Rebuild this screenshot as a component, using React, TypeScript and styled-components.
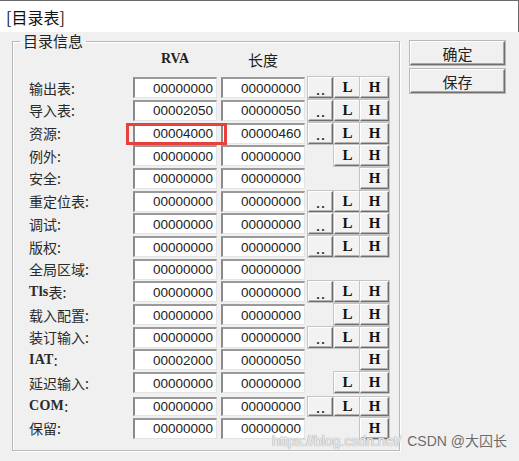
import React from 'react';
import styled, { createGlobalStyle } from 'styled-components';

const GlobalStyle = createGlobalStyle`
  html, body {
    margin: 0;
    padding: 0;
    background: #f0f0f0;
  }
  body {
    font-family: "Noto Sans CJK SC", "Liberation Sans", sans-serif;
    color: #222;
  }
`;

const cjk = `"Noto Sans CJK SC", "Liberation Sans", sans-serif`;
const serif = `"Liberation Serif", "DejaVu Serif", serif`;

type Row = {
  label: React.ReactNode;
  rva: string;
  size: string;
  dots?: boolean;
  low?: boolean;
  high?: boolean;
  mark?: boolean;
  spaced?: boolean;
};

const Latin = styled.span`
  font-family: ${serif};
  font-size: 14px;
  font-weight: 700;
  letter-spacing: 0.3px;
`;

const rows: Row[] = [
  { label: '输出表:', rva: '00000000', size: '00000000', dots: true, low: true, high: true },
  { label: '导入表:', rva: '00002050', size: '00000050', dots: true, low: true, high: true },
  { label: '资源:', rva: '00004000', size: '00000460', dots: true, low: true, high: true, mark: true },
  { label: '例外:', rva: '00000000', size: '00000000', low: true, high: true },
  { label: '安全:', rva: '00000000', size: '00000000', high: true },
  { label: '重定位表:', rva: '00000000', size: '00000000', dots: true, low: true, high: true },
  { label: '调试:', rva: '00000000', size: '00000000', dots: true, low: true, high: true },
  { label: '版权:', rva: '00000000', size: '00000000', dots: true, low: true, high: true },
  { label: '全局区域:', rva: '00000000', size: '00000000' },
  { label: <><Latin>Tls</Latin>表:</>, rva: '00000000', size: '00000000', dots: true, low: true, high: true },
  { label: '载入配置:', rva: '00000000', size: '00000000', low: true, high: true },
  { label: '装订输入:', rva: '00000000', size: '00000000', dots: true, low: true, high: true },
  { label: <><Latin>IAT</Latin>:</>, rva: '00002000', size: '00000050', high: true },
  { label: '延迟输入:', rva: '00000000', size: '00000000', low: true, high: true },
  { label: <><Latin>COM</Latin>:</>, rva: '00000000', size: '00000000', dots: true, low: true, high: true, spaced: true },
  { label: '保留:', rva: '00000000', size: '00000000', high: true },
];

const Window = styled.div`
  position: relative;
  width: 519px;
  height: 461px;
  overflow: hidden;
  display: flex;
  flex-direction: column;
`;

const TitleBar = styled.div`
  height: 31px;
  background: #fff;
  border-top: 1px solid #6a6a6a;
  border-right: 1px solid #6a6a6a;
  box-sizing: content-box;
  display: flex;
  align-items: center;
  padding-left: 6px;
  font-family: ${cjk};
  font-size: 16px;
  color: #111;
`;

const Body = styled.div`
  flex: 1;
  display: flex;
  align-items: flex-start;
  padding-left: 12px;
  border-left: 1px solid #6a6a6a;
  margin-left: -1px;
`;

const Group = styled.fieldset`
  margin: 0;
  padding: 0 0 11px 0;
  width: 388px;
  box-sizing: border-box;
  border: 1px solid #b9b9b9;
  box-shadow: inset 1px 1px 0 #fff, 1px 1px 0 #fff;
  min-inline-size: 0;
`;

const Legend = styled.legend`
  margin-left: 7px;
  padding: 0 3px;
  line-height: 18px;
  font-family: ${cjk};
  font-size: 15px;
  color: #222;
`;

const Grid = styled.div`
  display: grid;
  grid-template-columns: 100px 84px 84px 24px 24px 24px;
  grid-template-rows: 25.5px;
  grid-auto-rows: 21px;
  column-gap: 4px;
  row-gap: 1.7px;
  padding-left: 16px;
  & > :nth-child(6n + 4) { margin-left: -1px; }
  & > :nth-child(6n + 5) { margin-left: -3px; }
  & > :nth-child(6n + 6) { margin-left: -5px; }
`;

const HeaderCell = styled.div<{ $latin?: boolean }>`
  height: 18px;
  display: flex;
  align-items: center;
  justify-content: center;
  font-family: ${p => (p.$latin ? serif : cjk)};
  font-weight: ${p => (p.$latin ? 700 : 400)};
  font-size: ${p => (p.$latin ? '14px' : '15px')};
  color: #222;
`;

const Label = styled.div<{ $spaced?: boolean }>`
  display: flex;
  align-items: center;
  margin-top: ${p => (p.$spaced ? '2px' : '0')};
  font-family: ${cjk};
  font-size: 14px;
  color: #2a2a2a;
`;

const Field = styled.div<{ $mark?: boolean; $spaced?: boolean }>`
  position: relative;
  z-index: ${p => (p.$mark ? 1 : 0)};
  margin-top: ${p => (p.$spaced ? '2px' : '0')};
  box-sizing: border-box;
  background: #fff;
  border-top: 2px solid #9a9a9a;
  border-left: 2px solid #8a8a8a;
  border-right: 1px solid #e4e4e4;
  border-bottom: 1px solid #e4e4e4;
  display: flex;
  align-items: center;
  justify-content: flex-end;
  padding-right: 3px;
  font-family: "Liberation Sans", Arial, sans-serif;
  font-size: 13.5px;
  color: #222;

  &::after {
    content: '';
    display: ${p => (p.$mark ? 'block' : 'none')};
    position: absolute;
    left: -9px;
    top: -2px;
    right: -11px;
    bottom: -2px;
    border: 3px solid #e8403a;
  }
`;

const SmallButton = styled.button<{ $spaced?: boolean; $hidden?: boolean }>`
  visibility: ${p => (p.$hidden ? 'hidden' : 'visible')};
  margin: ${p => (p.$spaced ? '2px' : '0')} 0 0 0;
  padding: 0;
  box-sizing: border-box;
  background: #f2f2f2;
  border: 1px solid;
  border-color: #fff #6e6e6e #6e6e6e #fff;
  box-shadow: 0 0 0 1px #c4c4c4, inset -1px -1px 0 #b4b4b4;
  font-family: ${serif};
  font-size: 15px;
  font-weight: 700;
  color: #111;
  display: flex;
  align-items: center;
  justify-content: center;
  line-height: 1;
`;

const Dots = styled.span`
  font-size: 12px;
  letter-spacing: 2px;
  padding: 6px 0 0 2px;
`;

const Side = styled.div`
  margin-top: 9px;
  margin-left: 10px;
  display: flex;
  flex-direction: column;
  gap: 4px;
`;

const ActionButton = styled.button`
  width: 95px;
  height: 24px;
  padding: 0;
  box-sizing: border-box;
  background: #f0f0f0;
  border: 1px solid;
  border-color: #fff #6e6e6e #6e6e6e #fff;
  box-shadow: 0 0 0 1px #b8b8b8, inset -1px -1px 0 #a8a8a8;
  font-family: ${cjk};
  font-size: 15px;
  line-height: 1;
  color: #222;
`;

const Watermark = styled.div`
  position: absolute;
  z-index: 2;
  right: 12px;
  bottom: 11px;
  display: flex;
  align-items: baseline;
  gap: 6px;
  font-family: "Liberation Sans", "Noto Sans CJK SC", sans-serif;
  font-size: 14px;
  pointer-events: none;
`;

const WatermarkUrl = styled.span`
  color: rgba(255, 255, 255, 0.85);
  text-shadow: 0 0 1px #9a9a9a, 0 0 1px #9a9a9a;
`;

const WatermarkName = styled.span`
  color: #6a6a6a;
  text-shadow: 0 0 1px #fff;
`;

function App() {
  return (
    <>
      <GlobalStyle />
      <Window>
        <TitleBar>[目录表]</TitleBar>
        <Body>
          <Group>
            <Legend>目录信息</Legend>
            <Grid>
              <HeaderCell />
              <HeaderCell $latin>RVA</HeaderCell>
              <HeaderCell>长度</HeaderCell>
              <HeaderCell />
              <HeaderCell />
              <HeaderCell />
              {rows.map((row, index) => (
                <React.Fragment key={index}>
                  <Label $spaced={row.spaced}>{row.label}</Label>
                  <Field $mark={row.mark} $spaced={row.spaced}>{row.rva}</Field>
                  <Field $spaced={row.spaced}>{row.size}</Field>
                  <SmallButton $spaced={row.spaced} $hidden={!row.dots}>
                    <Dots>..</Dots>
                  </SmallButton>
                  <SmallButton $spaced={row.spaced} $hidden={!row.low}>L</SmallButton>
                  <SmallButton $spaced={row.spaced} $hidden={!row.high}>H</SmallButton>
                </React.Fragment>
              ))}
            </Grid>
          </Group>
          <Side>
            <ActionButton>确定</ActionButton>
            <ActionButton>保存</ActionButton>
          </Side>
        </Body>
        <Watermark>
          <WatermarkUrl>https://blog.csdn.net/</WatermarkUrl>
          <WatermarkName>CSDN @大囚长</WatermarkName>
        </Watermark>
      </Window>
    </>
  );
}

export default App;
